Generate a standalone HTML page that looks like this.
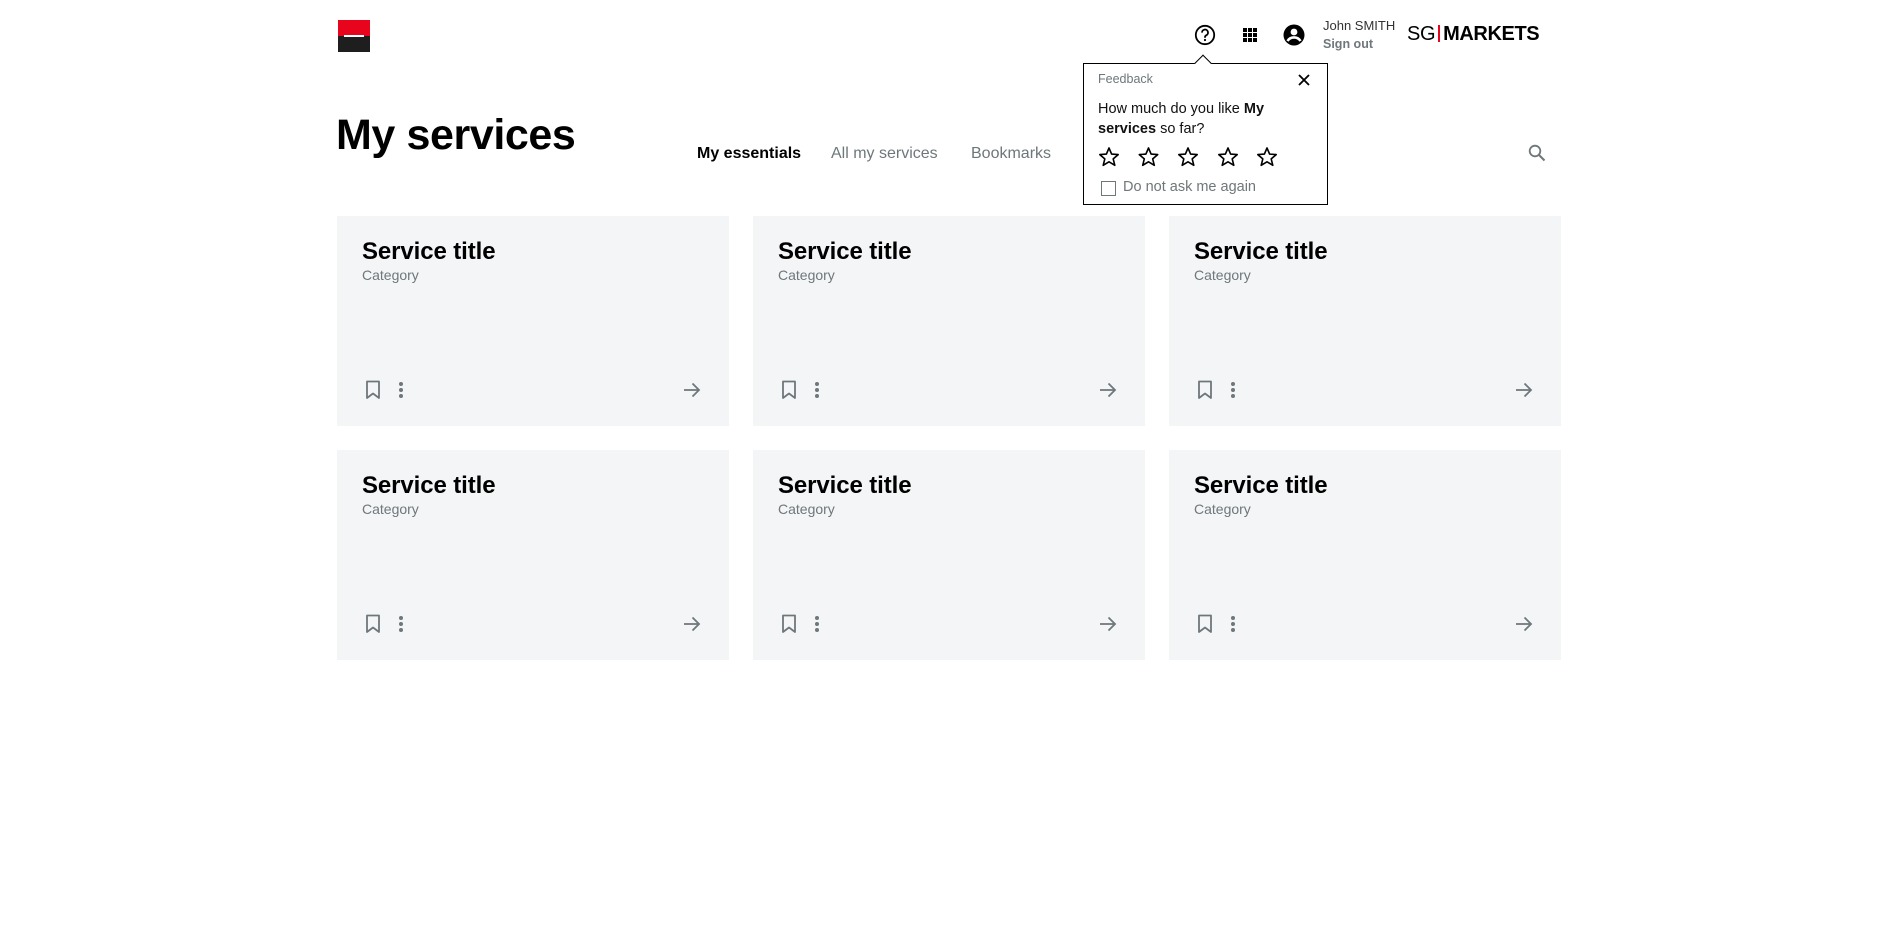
<!DOCTYPE html>
<html><head><meta charset="utf-8"><style>
*{margin:0;padding:0;box-sizing:border-box}
html,body{width:1896px;height:938px;background:#fff;overflow:hidden;font-family:"Liberation Sans",Arial,sans-serif;color:#000}
.abs{position:absolute}
.card{position:absolute;width:392px;height:210px;background:#f4f5f7}
.card .t{position:absolute;left:25px;top:22px;font-size:24px;font-weight:bold;letter-spacing:-0.1px}
.card .c{position:absolute;left:25px;top:51px;font-size:14px;color:#6e777a}
.card svg{position:absolute}
</style></head><body>
<div class="abs" style="left:338px;top:20px;width:32px;height:32px;background:#1e1e1e">
<div style="position:absolute;left:0;top:0;width:32px;height:16px;background:#e9041e"></div>
<div style="position:absolute;left:6px;top:15px;width:20px;height:2px;background:#fff"></div>
</div>
<div class="abs" style="left:336px;top:110px;font-size:43px;font-weight:bold;letter-spacing:-0.4px;line-height:50px">My services</div>
<div class="abs" style="left:697px;top:145px;font-size:16px;font-weight:bold;line-height:18px">My essentials</div>
<div class="abs" style="left:831px;top:145px;font-size:16px;color:#6e777a;line-height:18px">All my services</div>
<div class="abs" style="left:971px;top:145px;font-size:16px;color:#6e777a;line-height:18px">Bookmarks</div>
<svg class="abs" style="left:1528px;top:144px" width="18" height="18" viewBox="0 0 18 18"><circle cx="7" cy="7" r="5.3" fill="none" stroke="#6e777a" stroke-width="1.8"/><path d="M11 11l5.5 5.5" stroke="#6e777a" stroke-width="2"/></svg>
<svg class="abs" style="left:1194px;top:24px" width="22" height="22" viewBox="0 0 22 22"><circle cx="11" cy="11" r="9.2" fill="none" stroke="#000" stroke-width="1.8"/><path d="M8 8.6a3 3 0 1 1 4.2 2.7c-.8.4-1.2.9-1.2 1.9v.6" fill="none" stroke="#000" stroke-width="1.8"/><circle cx="11" cy="16" r="1.1"/></svg>
<svg class="abs" style="left:1243px;top:28px" width="14" height="14" viewBox="0 0 14 14"><g fill="#000"><rect x="0" y="0" width="4" height="4"/><rect x="5" y="0" width="4" height="4"/><rect x="10" y="0" width="4" height="4"/><rect x="0" y="5" width="4" height="4"/><rect x="5" y="5" width="4" height="4"/><rect x="10" y="5" width="4" height="4"/><rect x="0" y="10" width="4" height="4"/><rect x="5" y="10" width="4" height="4"/><rect x="10" y="10" width="4" height="4"/></g></svg>
<svg class="abs" style="left:1283px;top:24px" width="22" height="22" viewBox="0 0 22 22"><circle cx="11" cy="11" r="10.5"/><circle cx="11" cy="8" r="3.4" fill="#fff"/><path d="M4.5 17c1.5-2.5 4-3.6 6.5-3.6s5 1.1 6.5 3.6" stroke="#fff" stroke-width="2.6" fill="none"/></svg>
<div class="abs" style="left:1323px;top:18px;font-size:13px;color:#333">John SMITH</div>
<div class="abs" style="left:1323px;top:37px;font-size:12.5px;color:#6e777a;font-weight:bold">Sign out</div>
<div class="abs" style="left:1407px;top:22px;font-size:20px;line-height:24px;white-space:nowrap;letter-spacing:-0.4px"><span>SG</span><span style="display:inline-block;width:2px;height:17px;background:#e9041e;margin:0 3px 0 3px;vertical-align:-2px"></span><b>MARKETS</b></div>
<div class="abs" style="left:1083px;top:63px;width:245px;height:142px;border:1.5px solid #000;background:#fff"></div>
<div class="abs" style="left:1197px;top:57px;width:12px;height:12px;background:#fff;border-left:1.5px solid #000;border-top:1.5px solid #000;transform:rotate(45deg)"></div>
<div class="abs" style="left:1098px;top:72px;font-size:12.5px;color:#6e777a">Feedback</div>
<svg class="abs" style="left:1298px;top:74px" width="12" height="12" viewBox="0 0 12 12"><path d="M1 1l10 10M11 1L1 11" stroke="#000" stroke-width="1.8"/></svg>
<div class="abs" style="left:1098px;top:99px;font-size:14.5px;line-height:20px;width:200px;color:#111">How much do you like <b>My services</b> so far?</div>
<svg class="abs" style="left:1098px;top:146px" width="190" height="22" viewBox="0 0 190 22"><g fill="none" stroke="#000" stroke-width="1.6" stroke-linejoin="round">
<path d="M11 2l2.6 6.1 6.6.5-5 4.3 1.6 6.4L11 15.8l-5.8 3.5 1.6-6.4-5-4.3 6.6-.5z"/>
<path transform="translate(39.5 0)" d="M11 2l2.6 6.1 6.6.5-5 4.3 1.6 6.4L11 15.8l-5.8 3.5 1.6-6.4-5-4.3 6.6-.5z"/>
<path transform="translate(79 0)" d="M11 2l2.6 6.1 6.6.5-5 4.3 1.6 6.4L11 15.8l-5.8 3.5 1.6-6.4-5-4.3 6.6-.5z"/>
<path transform="translate(119 0)" d="M11 2l2.6 6.1 6.6.5-5 4.3 1.6 6.4L11 15.8l-5.8 3.5 1.6-6.4-5-4.3 6.6-.5z"/>
<path transform="translate(158 0)" d="M11 2l2.6 6.1 6.6.5-5 4.3 1.6 6.4L11 15.8l-5.8 3.5 1.6-6.4-5-4.3 6.6-.5z"/></g></svg>
<div class="abs" style="left:1101px;top:181px;width:15px;height:15px;border:1.6px solid #6e777a"></div>
<div class="abs" style="left:1123px;top:179px;font-size:14.5px;color:#6e777a">Do not ask me again</div>

<div class="card" style="left:337px;top:216px"></div>
<div class="card" style="left:753px;top:216px"></div>
<div class="card" style="left:1169px;top:216px"></div>
<div class="card" style="left:337px;top:450px"></div>
<div class="card" style="left:753px;top:450px"></div>
<div class="card" style="left:1169px;top:450px"></div>
<script>
document.querySelectorAll('.card').forEach(function(c){
c.innerHTML='<div class="t">Service title</div><div class="c">Category</div>'+
'<svg style="left:28px;top:164px" width="16" height="20" viewBox="0 0 16 20"><path d="M2 1.5h12v16.5l-6-4.5-6 4.5z" fill="none" stroke="#6e777a" stroke-width="1.8" stroke-linejoin="round"/></svg>'+
'<svg style="left:61px;top:164px" width="6" height="20" viewBox="0 0 6 20"><circle cx="3" cy="4" r="2" fill="#6e777a"/><circle cx="3" cy="10" r="2" fill="#6e777a"/><circle cx="3" cy="16" r="2" fill="#6e777a"/></svg>'+
'<svg style="left:346px;top:166px" width="18" height="16" viewBox="0 0 18 16"><path d="M1 8h15M9.5 1.5L16 8l-6.5 6.5" fill="none" stroke="#6e777a" stroke-width="1.8"/></svg>';
});
</script>
</body></html>
